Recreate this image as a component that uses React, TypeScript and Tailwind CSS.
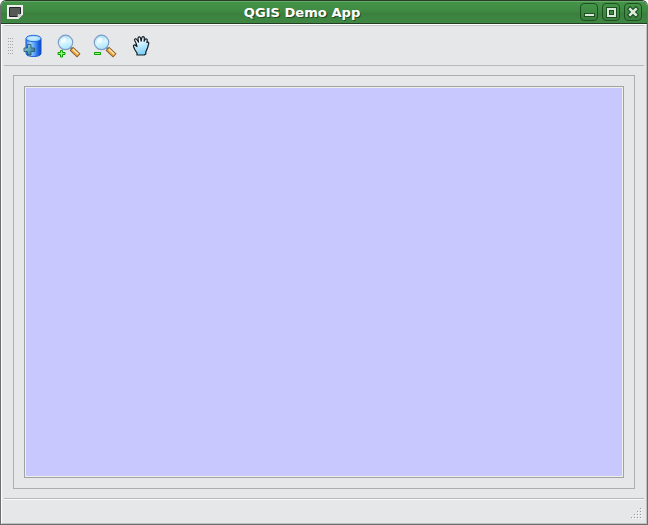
import React from "react";

const DatabaseAddIcon = () => (
  <svg width="20" height="24" viewBox="0 0 20 24">
    <defs>
      <linearGradient id="cyl" x1="0" x2="1">
        <stop offset="0" stopColor="#3f8df0" />
        <stop offset=".3" stopColor="#9fd0ff" />
        <stop offset=".55" stopColor="#5ba4fa" />
        <stop offset=".8" stopColor="#1f68e6" />
        <stop offset="1" stopColor="#0c47c0" />
      </linearGradient>
      <linearGradient id="add" x1="0" x2="1" y2="1">
        <stop offset="0" stopColor="#b9e0e6" />
        <stop offset=".5" stopColor="#5fa5b8" />
        <stop offset="1" stopColor="#1d6480" />
      </linearGradient>
    </defs>
    <path d="M3 4.500V19.500c0 4 15 4 15 0V4.500z" fill="url(#cyl)" stroke="#1555cf" />
    <ellipse cx="10.500" cy="4.500" rx="7.500" ry="3.200" fill="#a5d8ff" stroke="#1c66df" />
    <ellipse cx="10" cy="4.300" rx="5" ry="1.500" fill="#c9ebff" />
    <path d="M4.500 10.500h3.500v3.500h3.500v3.500H8V21H4.500v-3.500H1v-3.500h3.500z" fill="url(#add)" stroke="#255469" strokeWidth=".8" />
  </svg>
);

const ZoomIcon = ({ plus = false }: { plus?: boolean }) => (
  <svg width="24" height="24" viewBox="0 0 24 24">
    <defs>
      <linearGradient id="lens" x1=".3" y1="0" x2=".6" y2="1">
        <stop offset="0" stopColor="#a5dcf5" />
        <stop offset=".5" stopColor="#d8f6ff" />
        <stop offset="1" stopColor="#a4e3fb" />
      </linearGradient>
    </defs>
    <path d="M13 13l2.500 2.500" stroke="#8c8f99" strokeWidth="2.200" />
    <path d="M14.300 14.600l7.500 7" stroke="#80582f" strokeWidth="5" />
    <path d="M15 15.300l6.200 5.700" stroke="#f0a53a" strokeWidth="3.400" />
    <path d="M15.700 15l5.600 5.200" stroke="#ffebc4" strokeWidth="1.300" />
    <circle cx="8.500" cy="8.400" r="7.200" fill="url(#lens)" stroke="#7f9cc4" strokeWidth="1.200" />
    <ellipse cx="6.600" cy="6.200" rx="3" ry="2.300" fill="#fff" opacity=".75" transform="rotate(-35 6.600 6.200)" />
    {plus ? (
      <path d="M3.500 16.500h2v2h2.500v2h-2.500v2.500h-2v-2.500H1v-2h2.500z" fill="#9dff7c" stroke="#07a000" />
    ) : (
      <path d="M1.500 18.500h6v2h-6z" fill="#9dff7c" stroke="#07a000" />
    )}
  </svg>
);

const HandIcon = () => (
  <svg width="18" height="22" viewBox="0 0 18 22">
    <defs>
      <linearGradient id="palm" x1=".2" y1="0" x2=".5" y2="1">
        <stop offset=".15" stopColor="#ffffff" />
        <stop offset=".5" stopColor="#c5ecff" />
        <stop offset="1" stopColor="#78cdf6" />
      </linearGradient>
    </defs>
    <path
      d="M5 21V19L3 16 1.500 12.500c-.3-1.500 1.300-2 2.200-1L5 12.500 4 9 2.700 6.500c-.6-1.600 1.200-2.400 2-1L6.500 8 6 4.500c-.1-1.900 2-2.100 2.500-.5L9.200 7 9.800 4c.3-1.900 2.600-1.700 2.500 0L12.200 7l.8-1.500c.9-1.300 2.600-.5 2.200.9L14.900 8.500c1.100-1 2.200 0 1.800 1.200L15.500 14l-1.700 4v2l-1.500 1z"
      fill="url(#palm)"
      stroke="#121c24"
      strokeWidth="1.200"
      strokeLinejoin="round"
    />
    <path d="M6.500 7.500l.2 1M9.200 6.500v1M12.200 6.700l-.2 1" stroke="#121c24" strokeWidth=".8" />
  </svg>
);

const WindowButton = ({ children }: { children: React.ReactNode }) => (
  <div className="h-[18px] w-[18px] rounded-[4px] border border-[#1e4f20] bg-linear-to-b from-[#449548] to-[#397e3d]">
    <svg width="16" height="16" viewBox="0 0 16 16" fill="none" shapeRendering="crispEdges">
      {children}
    </svg>
  </div>
);

const gripRows = [0, 1, 2, 3, 4, 5];

export default function App() {
  return (
    <div className="h-[525px] w-[648px] bg-white">
      <div className="flex h-full flex-col overflow-hidden rounded-t-[6px] border border-[#6c6d6e] border-t-[#263c27] bg-[#e6e7e8]">
        <header className="-mx-px flex h-[23px] shrink-0 items-center border-x border-b border-[#263c27] bg-[linear-gradient(#65aa68_0_1px,#459349_1px,#3e8942_11px,#3b7f3f_12px,#3f8843_22px)] pr-[5px] pl-[6px]">
          <svg width="16" height="14" viewBox="0 0 16 14" className="shrink-0">
            <path d="M0 0h16v9.500L11.500 14H0z" fill="#eeeeee" />
            <path d="M2.500 2.500h11v6.500l-3 2.500h-8z" fill="#565a57" stroke="#222724" />
            <path d="M11 13.500V9.500h4.500z" fill="#c9cbc9" stroke="#e6e6e6" strokeWidth=".5" />
          </svg>
          <div className="flex-1 scale-x-[1.09] pt-px pl-[1px] text-center font-['DejaVu_Sans',sans-serif] text-[12px] leading-[22px] font-bold whitespace-nowrap text-white [text-shadow:1px_1px_0_#234c25]">
            QGIS Demo App
          </div>
          <div className="flex gap-1">
            <WindowButton>
              <path d="M3 9h11v4H3z" fill="#1e4f20" />
              <path d="M4 10h9v2H4z" fill="#d9eadb" />
            </WindowButton>
            <WindowButton>
              <path d="M3 3h11v11H3z" fill="#1e4f20" />
              <path d="M4 4h9v9H4z" fill="#d9eadb" />
              <path d="M6 6h5v5H6z" fill="#1e4f20" />
              <path d="M7 7h3v3H7z" fill="#3e8942" />
            </WindowButton>
            <WindowButton>
              <g shapeRendering="auto">
                <path d="M3.500 3.500l9 9M12.500 3.500l-9 9" stroke="#1e4f20" strokeWidth="4.600" />
                <path d="M4.300 4.300l7.400 7.400M11.700 4.300l-7.400 7.400" stroke="#dcebdd" strokeWidth="2.600" />
              </g>
            </WindowButton>
          </div>
        </header>

        <div className="flex min-h-0 flex-1 flex-col border border-t-white border-r-[#c0c1c2] border-b-[#c0c1c2] border-l-white">
          <div className="mx-0.5 flex h-[41px] shrink-0 items-start border-t border-b border-t-[#c4c5c6] border-b-[#b7b9ba] pt-2 pl-1">
            <svg width="5" height="16" viewBox="0 0 5 16" shapeRendering="crispEdges" className="mt-1 mr-[10px]">
              {gripRows.map((r) => (
                <path key={r} d={`M0 ${r * 3}h1v1H0zM2 ${r * 3}h1v1H2zM4 ${r * 3}h1v1H4z`} fill="#a6a8a9" />
              ))}
            </svg>
            <DatabaseAddIcon />
            <div className="ml-[14px]"><ZoomIcon plus /></div>
            <div className="ml-3"><ZoomIcon /></div>
            <div className="ml-[15px]"><HandIcon /></div>
          </div>

          <main className="mx-[11px] mt-[9px] mb-[9px] flex min-h-0 flex-1 border border-[#abadae] p-[10px]">
            <div className="flex flex-1 border border-[#a1a3a3] bg-[#efefec] p-px">
              <div className="flex-1 bg-[#c8c8ff]" />
            </div>
          </main>

          <footer className="mx-0.5 flex h-[25px] shrink-0 items-end justify-end border-t border-[#b7b9ba] shadow-[inset_0_1px_0_#fafafa]">
            <svg width="13" height="13" viewBox="0 0 13 13" shapeRendering="crispEdges" className="mb-0.5">
              {[0, 1, 2, 3].map((r) =>
                [0, 1, 2, 3].slice(3 - r).map((c) => (
                  <g key={`${r}-${c}`}>
                    <rect x={c * 3 + 1} y={r * 3 + 1} width="1" height="1" fill="#fff" />
                    <rect x={c * 3} y={r * 3} width="1" height="1" fill="#999b9c" />
                  </g>
                )),
              )}
            </svg>
          </footer>
        </div>
      </div>
    </div>
  );
}
